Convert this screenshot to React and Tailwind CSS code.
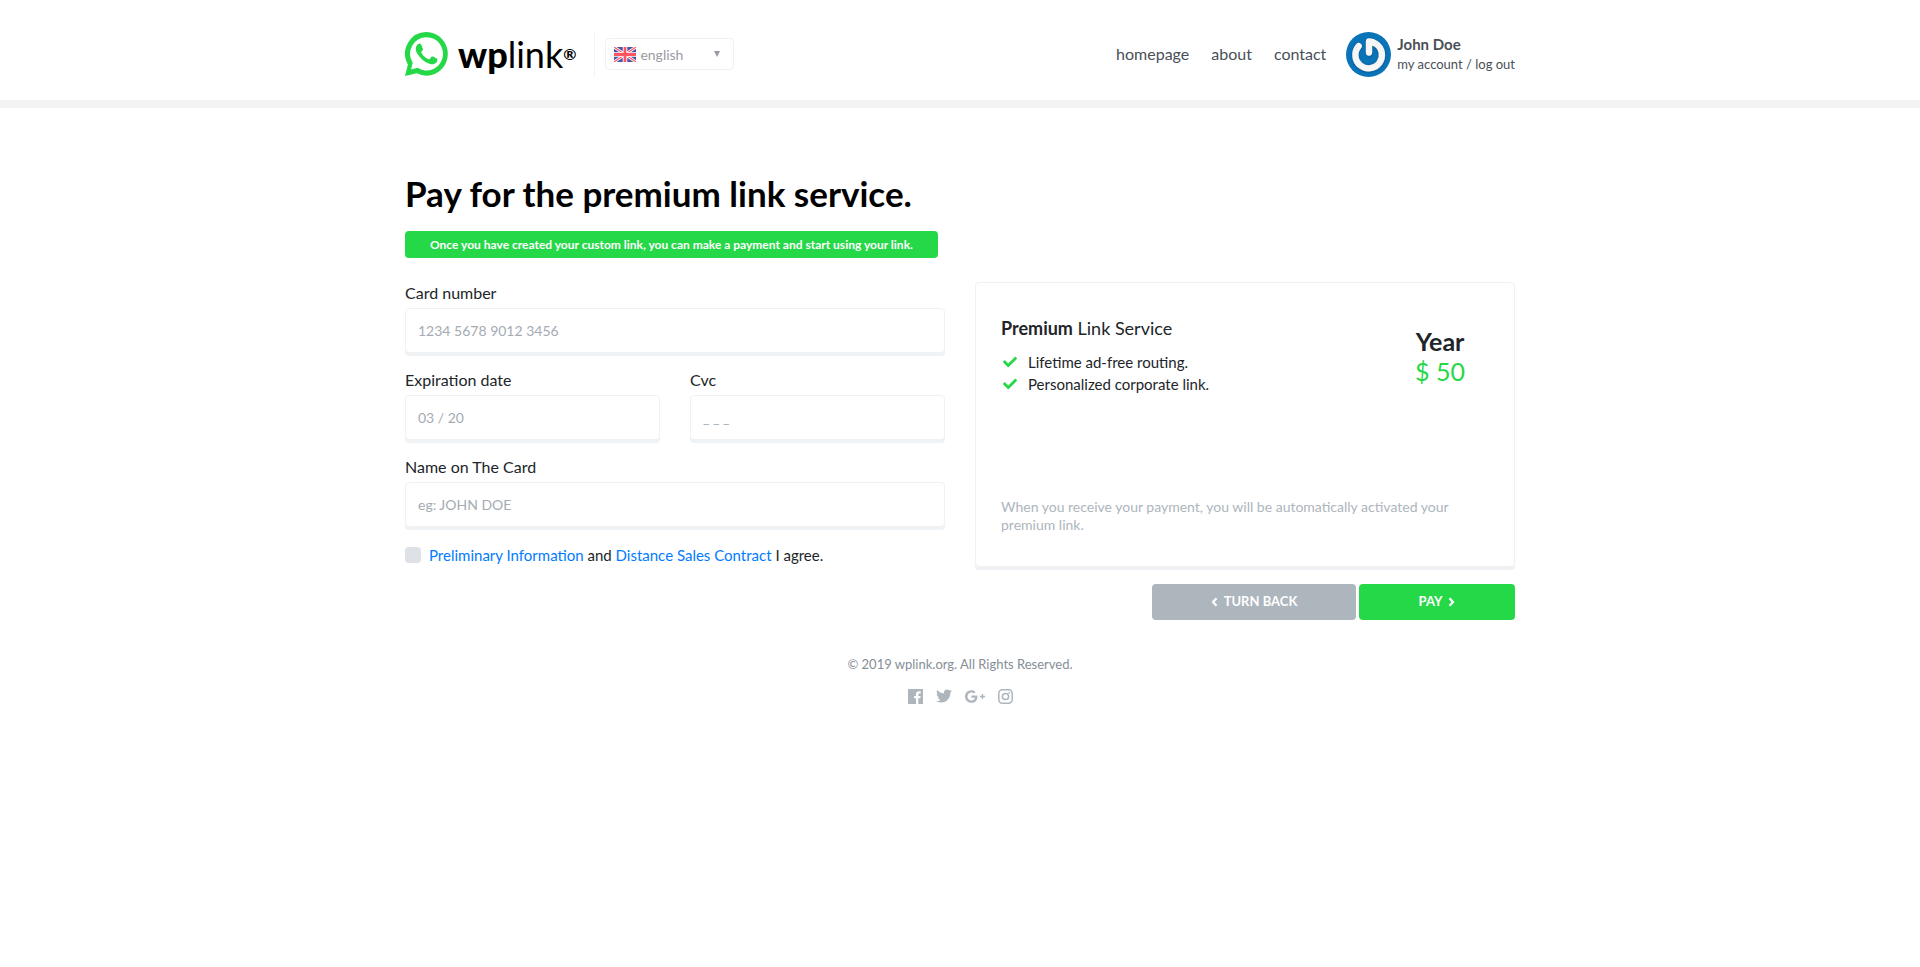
import { FaCheck, FaTwitter } from "react-icons/fa";

const inputClass =
  "block h-[45px] w-full rounded border border-[#f1f1f1] bg-white px-3 text-[14px] text-[#495057] shadow-[0_3px_0_#eff3f6] outline-none placeholder:text-[#a4abb3] placeholder:opacity-100";

function Field({ id, label, placeholder }) {
  return (
    <div>
      <label htmlFor={id} className="block pb-1 text-[16px] leading-[22px] text-[#212529]">
        {label}
      </label>
      <input id={id} type="text" placeholder={placeholder} className={inputClass} />
    </div>
  );
}

function WhatsappLogo() {
  return (
    <svg viewBox="0 0 24 24" className="h-[44px] w-[43px]" fill="#25d848" preserveAspectRatio="none" aria-hidden="true">
      <path d="M17.472 14.382c-.297-.149-1.758-.867-2.03-.967-.273-.099-.471-.148-.67.15-.197.297-.767.966-.94 1.164-.173.199-.347.223-.644.075-.297-.15-1.255-.463-2.39-1.475-.883-.788-1.48-1.761-1.653-2.059-.173-.297-.018-.458.13-.606.134-.133.298-.347.446-.52.149-.174.198-.298.298-.497.099-.198.05-.371-.025-.52-.075-.149-.669-1.612-.916-2.207-.242-.579-.487-.5-.669-.51-.173-.008-.371-.01-.57-.01-.198 0-.52.074-.792.372-.272.297-1.04 1.016-1.04 2.479 0 1.462 1.065 2.875 1.213 3.074.149.198 2.096 3.2 5.077 4.487.709.306 1.262.489 1.694.625.712.227 1.36.195 1.871.118.571-.085 1.758-.719 2.006-1.413.248-.694.248-1.289.173-1.413-.074-.124-.272-.198-.57-.347" />
      <path fillRule="evenodd" d="M12 0a11.9 11.9 0 0 1 0 23.8a11.9 11.9 0 0 1-5.4-1.3L0 24l1.600-6.200A11.900 11.900 0 0 1 12 0zM12 2.800a9.100 9.100 0 0 0-7.700 14l-.9 3.600 3.700-.9A9.100 9.100 0 1 0 12 2.800z" />
    </svg>
  );
}

function Flag() {
  return (
    <svg viewBox="0 0 22 15" className="h-[15px] w-[22px] shrink-0" aria-hidden="true">
      <rect width="22" height="15" rx="1" fill="#4a55a5" />
      <path d="M0 0L22 15M22 0L0 15" stroke="#fff" strokeWidth="2.800" />
      <path d="M0 0L22 15M22 0L0 15" stroke="#ff5562" strokeWidth="1.100" />
      <path d="M11 0V15M0 7.500H22" stroke="#fff" strokeWidth="4.600" />
      <path d="M11 0V15M0 7.500H22" stroke="#ff5562" strokeWidth="2.800" />
    </svg>
  );
}

function Avatar() {
  return (
    <svg viewBox="0 0 45 45" className="size-[45px] shrink-0" aria-hidden="true">
      <defs>
        <filter id="soft" x="-20%" y="-20%" width="140%" height="140%">
          <feDropShadow dx="0" dy="0.500" stdDeviation="0.900" floodColor="#033a63" floodOpacity="0.700" />
        </filter>
      </defs>
      <circle cx="22.500" cy="22.500" r="22.500" fill="#0a74b9" />
      <g fill="none" stroke="#f6f6f6" strokeWidth="6.300" strokeLinecap="round" strokeLinejoin="round" filter="url(#soft)">
        <path d="M12.700 14.200A13.300 13.300 0 1 0 30 11.900C28 10.500 25.500 9.600 23 9.500V20.500" />
      </g>
    </svg>
  );
}

function Chevron({ d }) {
  return (
    <svg viewBox="0 0 7 10" className="h-[10px] w-[7px]" fill="none" stroke="currentColor" strokeWidth="2.200" aria-hidden="true">
      <path d={d} />
    </svg>
  );
}

function FacebookIcon() {
  return (
    <svg viewBox="0 0 24 24" className="size-[15px]" fill="currentColor" aria-hidden="true">
      <path d="M23.500 0H.5C.2 0 0 .2 0 .5v23c0 .3.2.5.5.5h12.318v-9.294H9.689v-3.621h3.129V8.410c0-3.099 1.894-4.785 4.659-4.785 1.325 0 2.464.097 2.796.141v3.240h-1.921c-1.500 0-1.792.721-1.792 1.771v2.311h3.584l-.465 3.630H16.560V24h6.940c.3 0 .5-.2.5-.5V.5c0-.3-.2-.5-.5-.5" />
    </svg>
  );
}

function GooglePlusIcon() {
  return (
    <svg viewBox="1 5 22 14" className="h-[13px] w-5" fill="currentColor" aria-hidden="true">
      <path d="M23 11.200H21V9.200H19.400V11.200H17.400V12.800H19.400V14.800H21V12.800H23M8 11V13.400H12C11.800 14.400 10.800 16.400 8 16.400C5.600 16.400 3.700 14.400 3.700 12C3.700 9.600 5.600 7.600 8 7.600C9.400 7.600 10.300 8.200 10.800 8.700L12.700 6.900C11.500 5.700 9.900 5 8 5C4.100 5 1 8.100 1 12C1 15.900 4.100 19 8 19C12 19 14.700 16.200 14.700 12.200C14.700 11.700 14.700 11.400 14.600 11H8Z" />
    </svg>
  );
}

function InstagramIcon() {
  return (
    <svg viewBox="0 0 15 15" className="size-[15px]" fill="none" stroke="currentColor" strokeWidth="1.500" aria-hidden="true">
      <rect x="0.800" y="0.800" width="13.400" height="13.400" rx="3.600" />
      <circle cx="7.500" cy="7.500" r="3.100" />
      <circle cx="11.300" cy="3.700" r="0.900" fill="currentColor" stroke="none" />
    </svg>
  );
}

export default function App() {
  return (
    <div className="min-h-screen bg-white font-[Lato,sans-serif] text-[#212529]">
      <header className="border-b-8 border-[#f1f3f5]">
        <div className="mx-auto flex h-[100px] max-w-[1140px] items-center px-[15px] pt-2">
          <a href="#" className="flex items-center gap-[10px] text-black">
            <WhatsappLogo />
            <span className="flex items-center text-[36px] leading-[44px]">
              <span className="font-black">wp</span>link
              <span className="text-[16px] font-bold">®</span>
            </span>
          </a>
          <div className="ml-[18px] h-[44px] border-l border-[#f1f3f5]" />
          <label className="relative ml-[10px] flex h-8 w-[129px] items-center rounded border border-[#f1f1f1] pl-2 text-[14px] text-[#999ca3]">
            <Flag />
            <select aria-label="Language" className="h-full flex-1 appearance-none bg-transparent pl-1 outline-none">
              <option>english</option>
            </select>
            <svg viewBox="0 0 6 6" className="absolute right-[13px] size-[6px]" fill="#999ca3" aria-hidden="true">
              <path d="M0 0H6L3 6z" />
            </svg>
          </label>
          <nav className="ml-auto flex gap-[22px] text-[16px] text-[#495057]">
            <a href="#">homepage</a>
            <a href="#">about</a>
            <a href="#">contact</a>
          </nav>
          <div className="ml-5 flex items-center gap-[6px] text-[#495057]">
            <Avatar />
            <div className="leading-5">
              <div className="text-[15px] font-bold">John Doe</div>
              <div className="text-[13px]">
                <a href="#">my account</a> / <a href="#">log out</a>
              </div>
            </div>
          </div>
        </div>
      </header>

      <main className="mx-auto max-w-[1140px] px-[15px] pt-[63px]">
        <h1 className="text-[35px] leading-[44px] font-bold text-black">Pay for the premium link service.</h1>
        <p className="mt-4 inline-block rounded bg-[#25d848] px-[25px] text-[12px] leading-[27px] font-bold text-white">
          Once you have created your custom link, you can make a payment and start using your link.
        </p>

        <form className="mt-[24px] grid grid-cols-2 gap-x-[30px]">
          <div className="flex flex-col gap-4">
            <Field id="card" label="Card number" placeholder="1234 5678 9012 3456" />
            <div className="grid grid-cols-2 gap-[30px]">
              <Field id="expiry" label="Expiration date" placeholder="03 / 20" />
              <Field id="cvc" label="Cvc" placeholder="_ _ _" />
            </div>
            <Field id="name" label="Name on The Card" placeholder="eg: JOHN DOE" />
            <div className="flex items-center gap-2 text-[15px] leading-6">
              <input id="agree" type="checkbox" className="size-4 appearance-none rounded bg-[#dee2e6] checked:bg-[#25d848]" />
              <label htmlFor="agree">
                <a href="#" className="text-[#007bff]">Preliminary Information</a> and{" "}
                <a href="#" className="text-[#007bff]">Distance Sales Contract</a> I agree.
              </label>
            </div>
          </div>

          <div>
            <section className="flex h-[285px] flex-col justify-between rounded border border-[#f1f1f1] px-[25px] pt-[33px] pb-8 shadow-[0_3px_0_#eff1f4]">
              <div className="flex justify-between">
                <div>
                  <h2 className="text-[18px] leading-6">
                    <strong>Premium</strong> Link Service
                  </h2>
                  <ul className="mt-[11px] text-[15px] leading-[22px]">
                    {["Lifetime ad-free routing.", "Personalized corporate link."].map((item) => (
                      <li key={item} className="flex items-center gap-[11px] pl-[2px]">
                        <FaCheck className="size-[14px] text-[#25d848]" />
                        {item}
                      </li>
                    ))}
                  </ul>
                </div>
                <div className="mt-[10px] mr-6 text-center text-[25px] leading-[30px]">
                  <div className="font-bold">Year</div>
                  <div className="text-[#25d848]">$ 50</div>
                </div>
              </div>
              <p className="text-[14px] leading-[18px] text-[#adb5bd]">
                When you receive your payment, you will be automatically activated your premium link.
              </p>
            </section>
            <div className="mt-[17px] flex justify-end gap-[3px] text-[13px] font-bold text-white">
              <button type="button" className="flex h-9 w-[204px] items-center justify-center gap-[6px] rounded bg-[#adb5bd]">
                <Chevron d="M5.500 1.200L2 5L5.500 8.800" />
                TURN BACK
              </button>
              <button type="submit" className="flex h-9 w-[156px] items-center justify-center gap-[6px] rounded bg-[#25d848]">
                PAY
                <Chevron d="M1.500 1.200L5 5L1.500 8.800" />
              </button>
            </div>
          </div>
        </form>
      </main>

      <footer className="mt-[34px] flex flex-col items-center text-[13px] leading-5 text-[#868e96]">
        <p>© 2019 wplink.org. All Rights Reserved.</p>
        <div className="mt-[14px] flex items-center gap-[13px] text-[#adb5bd]">
          <a href="#" aria-label="Facebook"><FacebookIcon /></a>
          <a href="#" aria-label="Twitter"><FaTwitter className="size-4" /></a>
          <a href="#" aria-label="Google Plus"><GooglePlusIcon /></a>
          <a href="#" aria-label="Instagram"><InstagramIcon /></a>
        </div>
      </footer>
    </div>
  );
}
